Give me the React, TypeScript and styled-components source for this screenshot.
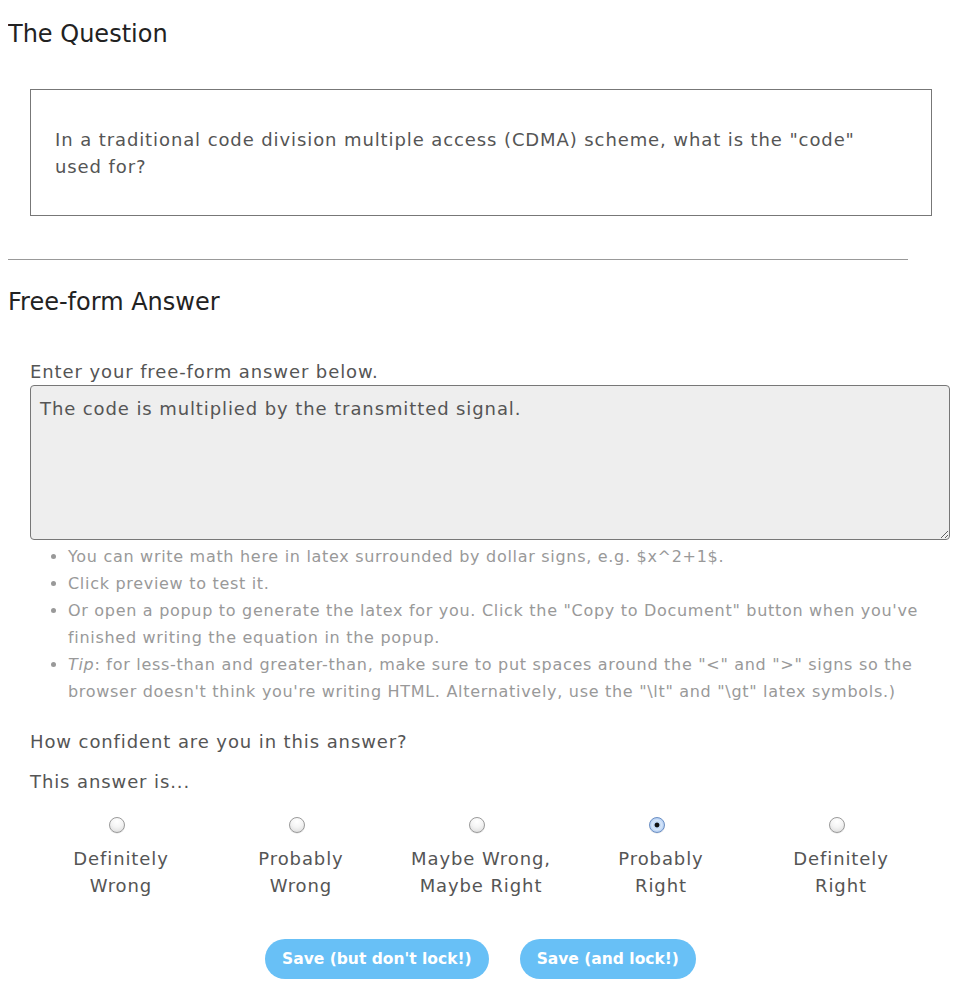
import React from "react";
import styled, { createGlobalStyle } from "styled-components";

const Global = createGlobalStyle`
  body {
    margin: 8px;
    background: #fff;
    font-family: "DejaVu Sans", Verdana, sans-serif;
    color: #555;
  }
`;

const Heading = styled.h2`
  margin: 11px 0 0;
  font-size: 24px;
  line-height: 30px;
  font-weight: normal;
  color: #222;
`;

const SecondHeading = styled(Heading)`
  margin-top: 27px;
`;

const QuestionBox = styled.div`
  margin: 40px 0 0 22px;
  width: 902px;
  box-sizing: border-box;
  border: 1px solid #777;
  padding: 36px 24px 35px;
  font-size: 18px;
  line-height: 27px;
  letter-spacing: 0.9px;
  color: #555;
`;

const Rule = styled.hr`
  margin: 43px 0 0;
  width: 900px;
  border: none;
  border-top: 1px solid #999;
  height: 0;
`;

const Indent = styled.div`
  margin-left: 22px;
`;

const Text = styled.div<{ $top: number }>`
  margin-top: ${(p) => p.$top}px;
  font-size: 18px;
  line-height: 27px;
  letter-spacing: 0.9px;
  color: #555;
`;

const Answer = styled.textarea`
  display: block;
  width: 920px;
  height: 155px;
  box-sizing: border-box;
  margin: 0;
  padding: 9px 9px;
  border: 1px solid #777;
  border-radius: 4px;
  background: #eee;
  font-family: "DejaVu Sans", Verdana, sans-serif;
  font-size: 18px;
  line-height: 27px;
  letter-spacing: 0.9px;
  color: #555;
  outline: none;
`;

const Hints = styled.ul`
  margin: 3px 0 0;
  padding-left: 38px;
  width: 870px;
  font-size: 16px;
  line-height: 27px;
  letter-spacing: 0.7px;
  color: #999;
  list-style: disc;
`;

const RadioRow = styled.div`
  margin: 22px 0 0 1px;
  display: grid;
  grid-template-columns: repeat(5, 180px);
`;

const Choice = styled.label`
  display: flex;
  flex-direction: column;
  align-items: center;
  font-size: 18px;
  line-height: 27px;
  letter-spacing: 0.9px;
  color: #555;
  text-align: center;
`;

const Radio = styled.input`
  appearance: none;
  width: 16px;
  height: 16px;
  margin: 0 9px 12px 0;
  border-radius: 50%;
  border: 1px solid #9a9a9a;
  box-sizing: border-box;
  background: radial-gradient(circle at 50% 25%, #ffffff 0%, #f4f4f4 45%, #d8d8d8 100%);
  box-shadow: 0 0.5px 0.5px rgba(0, 0, 0, 0.15);
  &:checked {
    border-color: #6b8fc4;
    background: radial-gradient(circle at 50% 50%, #111 0 2px, #b9d3f3 2.8px, #d6e6fa 45%, #8fb5ea 100%);
  }
`;

const Buttons = styled.div`
  margin-top: 40px;
  display: flex;
  justify-content: center;
  gap: 31px;
`;

const SaveButton = styled.button`
  height: 40px;
  padding: 0 17px;
  border: none;
  border-radius: 20px;
  background: #68c0f6;
  color: #fff;
  font-family: "DejaVu Sans", Verdana, sans-serif;
  font-weight: bold;
  font-size: 15.5px;
`;

const choices = [
  ["Definitely", "Wrong"],
  ["Probably", "Wrong"],
  ["Maybe Wrong,", "Maybe Right"],
  ["Probably", "Right"],
  ["Definitely", "Right"],
];

export default function App() {
  return (
    <>
      <Global />
      <Heading>The Question</Heading>
      <QuestionBox>
        In a traditional code division multiple access (CDMA) scheme, what is the "code" used for?
      </QuestionBox>
      <Rule />
      <SecondHeading>Free-form Answer</SecondHeading>
      <Indent>
        <Text $top={41}>Enter your free-form answer below.</Text>
        <Answer defaultValue="The code is multiplied by the transmitted signal." />
        <Hints>
          <li>You can write math here in latex surrounded by dollar signs, e.g. $x^2+1$.</li>
          <li>Click preview to test it.</li>
          <li>
            Or open a popup to generate the latex for you. Click the "Copy to Document" button when you've finished
            writing the equation in the popup.
          </li>
          <li>
            <i>Tip</i>: for less-than and greater-than, make sure to put spaces around the "&lt;" and "&gt;" signs so
            the browser doesn't think you're writing HTML. Alternatively, use the "\lt" and "\gt" latex symbols.)
          </li>
        </Hints>
        <Text $top={23}>How confident are you in this answer?</Text>
        <Text $top={13}>This answer is...</Text>
        <RadioRow>
          {choices.map(([a, b], i) => (
            <Choice key={i}>
              <Radio type="radio" name="confidence" defaultChecked={i === 3} />
              <span>
                {a}
                <br />
                {b}
              </span>
            </Choice>
          ))}
        </RadioRow>
      </Indent>
      <Buttons>
        <SaveButton>Save (but don't lock!)</SaveButton>
        <SaveButton>Save (and lock!)</SaveButton>
      </Buttons>
    </>
  );
}
